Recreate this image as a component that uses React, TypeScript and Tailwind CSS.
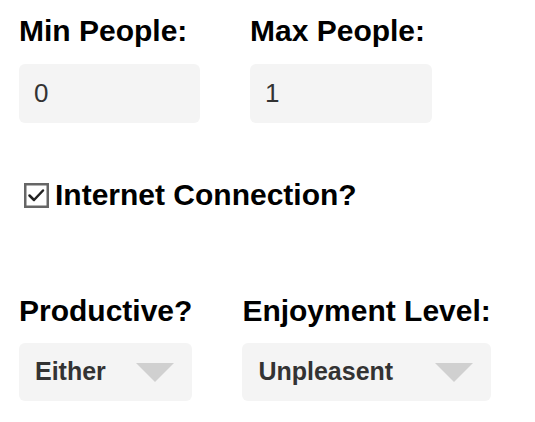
import { useState } from "react";

const font = { fontFamily: '"Liberation Sans", Arial, sans-serif' };

function Label({ children }: { children: React.ReactNode }) {
  return <h2 className="text-[30px] font-bold leading-[34px] text-black">{children}</h2>;
}

function Select({ value, width }: { value: string; width: string }) {
  return (
    <div
      className={`mt-[15px] flex h-[58px] items-center justify-between rounded-[6px] bg-[#f4f4f4] pl-4 pr-[18px] ${width}`}
    >
      <span className="text-[25px] font-bold text-[#333]">{value}</span>
      <svg width="38" height="19" viewBox="0 0 38 19" aria-hidden="true">
        <polygon points="0,0 38,0 19,19" fill="#d0d0d0" />
      </svg>
    </div>
  );
}

export default function App() {
  const [min, setMin] = useState("0");
  const [max, setMax] = useState("1");
  const [internet, setInternet] = useState(true);

  return (
    <div className="min-h-[422px] bg-white pl-[19px] pt-[14px]" style={font}>
      <div className="flex gap-[50px]">
        <div className="w-[181px]">
          <Label>Min People:</Label>
          <input
            value={min}
            onChange={(e) => setMin(e.target.value)}
            className="mt-4 h-[59px] w-[181px] rounded-[6px] bg-[#f4f4f4] px-[15px] text-[26px] text-[#333] outline-none"
          />
        </div>
        <div className="w-[182px]">
          <Label>Max People:</Label>
          <input
            value={max}
            onChange={(e) => setMax(e.target.value)}
            className="mt-4 h-[59px] w-[182px] rounded-[6px] bg-[#f4f4f4] px-[15px] text-[26px] text-[#333] outline-none"
          />
        </div>
      </div>

      <label className="mt-[55px] flex h-[34px] cursor-pointer items-center gap-[6px] pl-[5px]">
        <button
          type="button"
          onClick={() => setInternet(!internet)}
          className="flex h-[25px] w-[25px] items-center justify-center"
        >
          <svg width="25" height="25" viewBox="0 0 25 25" aria-hidden="true">
            <rect x="1.25" y="1.25" width="22.5" height="22.5" fill="white" stroke="#666" strokeWidth="2.5" />
            {internet && (
              <polyline
                points="5.5,12.5 10,17 19,7.5"
                fill="none"
                stroke="#222"
                strokeWidth="2.5"
                strokeLinecap="round"
                strokeLinejoin="round"
              />
            )}
          </svg>
        </button>
        <span className="text-[30px] font-bold leading-[34px] text-black">Internet Connection?</span>
      </label>

      <div className="mt-[82px] flex gap-[50px]">
        <div>
          <Label>Productive?</Label>
          <Select value="Either" width="w-[173px]" />
        </div>
        <div>
          <Label>Enjoyment Level:</Label>
          <Select value="Unpleasent" width="w-[249px]" />
        </div>
      </div>
    </div>
  );
}
